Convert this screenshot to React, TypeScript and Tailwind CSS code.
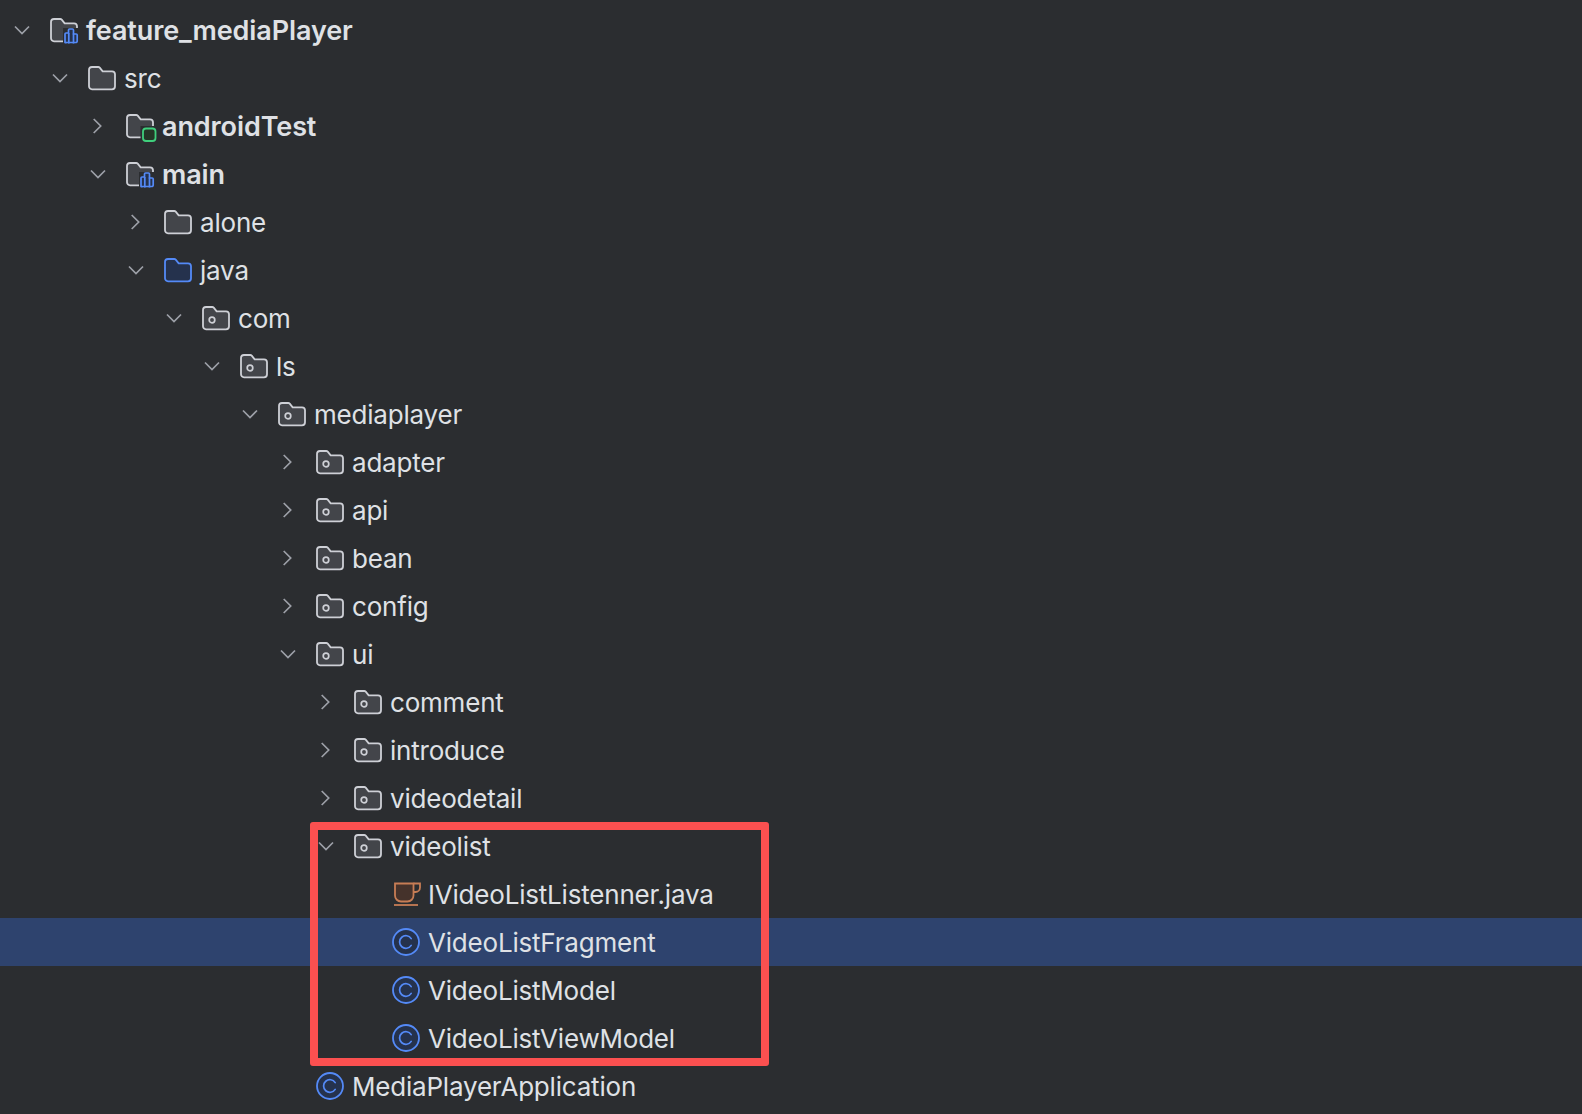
import { ReactNode } from 'react';

type IconKind = 'module' | 'plain' | 'test' | 'blue' | 'pkg' | 'java' | 'class';

interface Row {
  name: string;
  depth: number;
  icon: IconKind;
  open?: boolean;
  bold?: boolean;
}

const rows: Row[] = [
  { name: 'feature_mediaPlayer', depth: 0, icon: 'module', open: true, bold: true },
  { name: 'src', depth: 1, icon: 'plain', open: true },
  { name: 'androidTest', depth: 2, icon: 'test', open: false, bold: true },
  { name: 'main', depth: 2, icon: 'module', open: true, bold: true },
  { name: 'alone', depth: 3, icon: 'plain', open: false },
  { name: 'java', depth: 3, icon: 'blue', open: true },
  { name: 'com', depth: 4, icon: 'pkg', open: true },
  { name: 'ls', depth: 5, icon: 'pkg', open: true },
  { name: 'mediaplayer', depth: 6, icon: 'pkg', open: true },
  { name: 'adapter', depth: 7, icon: 'pkg', open: false },
  { name: 'api', depth: 7, icon: 'pkg', open: false },
  { name: 'bean', depth: 7, icon: 'pkg', open: false },
  { name: 'config', depth: 7, icon: 'pkg', open: false },
  { name: 'ui', depth: 7, icon: 'pkg', open: true },
  { name: 'comment', depth: 8, icon: 'pkg', open: false },
  { name: 'introduce', depth: 8, icon: 'pkg', open: false },
  { name: 'videodetail', depth: 8, icon: 'pkg', open: false },
  { name: 'videolist', depth: 8, icon: 'pkg', open: true },
  { name: 'IVideoListListenner.java', depth: 9, icon: 'java' },
  { name: 'VideoListFragment', depth: 9, icon: 'class' },
  { name: 'VideoListModel', depth: 9, icon: 'class' },
  { name: 'VideoListViewModel', depth: 9, icon: 'class' },
  { name: 'MediaPlayerApplication', depth: 7, icon: 'class' },
];

const folderPath =
  'M1 4a3 3 0 0 1 3-3h6.2a2 2 0 0 1 1.5.7l3 3.6h9.3a3 3 0 0 1 3 3v12a3 3 0 0 1-3 3H4a3 3 0 0 1-3-3z';

function Folder({ stroke = '#ced0d6', fill = '#43454a', children }: { stroke?: string; fill?: string; children?: ReactNode }) {
  return (
    <svg width="28" height="24" viewBox="0 0 28 24" fill="none" className="overflow-visible">
      <path d={folderPath} fill={fill} stroke={stroke} strokeWidth="1.8" strokeLinejoin="round" />
      {children}
    </svg>
  );
}

function FileIcon({ kind }: { kind: IconKind }) {
  if (kind === 'plain') return <Folder />;
  if (kind === 'blue') return <Folder stroke="#548af7" fill="#25324d" />;
  if (kind === 'pkg') {
    return (
      <Folder>
        <circle cx="10" cy="14" r="2.8" stroke="#ced0d6" strokeWidth="1.7" />
      </Folder>
    );
  }
  if (kind === 'module') {
    return (
      <Folder>
        <rect x="13" y="10" width="16" height="16" fill="#2b2d30" />
        <path
          d="M15 24.5v-8.5a1 1 0 0 1 1-1h2.5v-3a1 1 0 0 1 1-1h3a1 1 0 0 1 1 1v4h2.7a1 1 0 0 1 1 1v6a1.5 1.5 0 0 1-1.5 1.5h-9.2A1.5 1.5 0 0 1 15 24.5z"
          fill="#25324d"
          stroke="#548af7"
          strokeWidth="1.7"
          strokeLinejoin="round"
        />
        <path d="M18.8 15v10.5M23.5 15.5v10" stroke="#548af7" strokeWidth="1.7" />
      </Folder>
    );
  }
  if (kind === 'test') {
    return (
      <Folder>
        <rect x="14.5" y="12" width="17" height="17" fill="#2b2d30" />
        <rect x="17" y="14.5" width="12.5" height="12.5" rx="3" fill="#253627" stroke="#3fcf7c" strokeWidth="1.8" />
      </Folder>
    );
  }
  if (kind === 'java') {
    return (
      <svg width="28" height="24" viewBox="0 0 28 24" fill="none" className="overflow-visible">
        <path d="M3 1.5h18.5v12a6 6 0 0 1-6 6H9a6 6 0 0 1-6-6z" fill="#45322b" stroke="#c77d55" strokeWidth="1.8" />
        <path d="M21.5 1.5h6.5v4a4.5 4.5 0 0 1-4.5 4.5h-2" stroke="#c77d55" strokeWidth="1.8" />
        <path d="M2 23h24" stroke="#c77d55" strokeWidth="1.8" />
      </svg>
    );
  }
  return (
    <svg width="28" height="28" viewBox="0 0 28 28" fill="none">
      <circle cx="14" cy="14" r="13" fill="#25324d" stroke="#548af7" strokeWidth="1.8" />
      <path d="M19.2 10.6a6.3 6.3 0 1 0 0 6.8" stroke="#548af7" strokeWidth="1.7" strokeLinecap="round" />
    </svg>
  );
}

function Chevron({ open }: { open: boolean }) {
  return (
    <svg width="28" height="24" viewBox="0 0 28 24" fill="none">
      {open ? (
        <path d="M7 8.5 14 15.5 21 8.5" stroke="#9da0a8" strokeWidth="1.7" />
      ) : (
        <path d="M9.7 5 16.7 12 9.7 19" stroke="#9da0a8" strokeWidth="1.7" />
      )}
    </svg>
  );
}

export default function App() {
  return (
    <div className="relative h-[1114px] overflow-hidden bg-[#2b2d30] pt-[6px] font-['Inter',sans-serif] text-[#dfe1e5]">
      {rows.map((row) => (
        <div
          key={row.name}
          className={`flex h-12 items-center ${row.name === 'VideoListFragment' ? 'bg-[#2e436e]' : ''}`}
          style={{ paddingLeft: 8 + row.depth * 38 }}
        >
          <div className="flex w-[28px] justify-center">
            {row.open !== undefined && <Chevron open={row.open} />}
          </div>
          <div className="ml-[14px] flex w-[28px] items-center justify-center">
            <FileIcon kind={row.icon} />
          </div>
          <span
            className={`ml-2 whitespace-nowrap ${
              row.bold ? 'mt-[2px] text-[27px] font-semibold tracking-[-0.1px]' : 'mt-[1px] text-[26px] tracking-[-0.2px]'
            }`}
          >
            {row.name}
          </span>
        </div>
      ))}
      {/* red annotation round the videolist package */}
      <div className="absolute left-[310px] top-[822px] h-[244px] w-[459px] rounded-[3px] border-[8px] border-[#fb5050]" />
    </div>
  );
}
